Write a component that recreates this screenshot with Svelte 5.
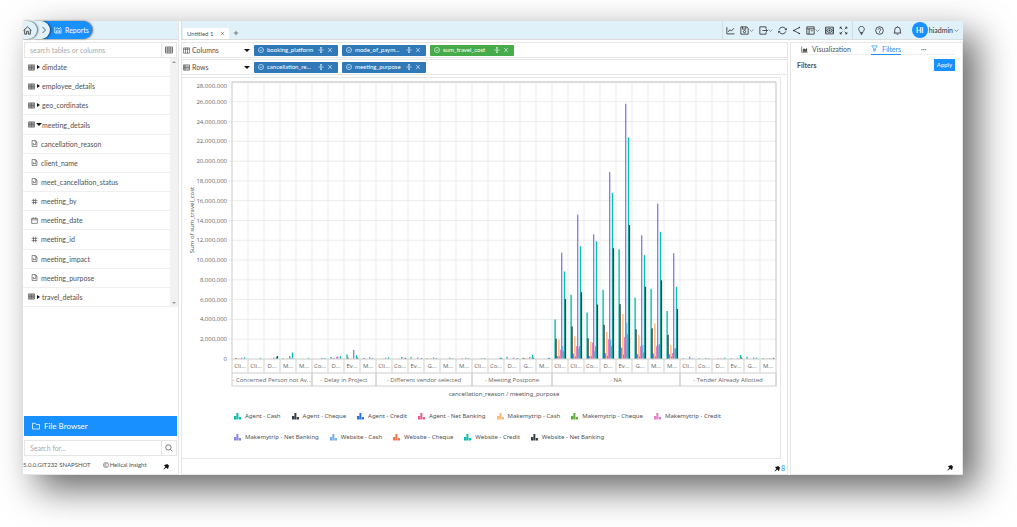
<script lang="ts">
	type Field = { name: string; kind: 'table' | 'open' | 'text' | 'number' | 'date' };

	const fields: Field[] = [
		{ name: 'dimdate', kind: 'table' },
		{ name: 'employee_details', kind: 'table' },
		{ name: 'geo_cordinates', kind: 'table' },
		{ name: 'meeting_details', kind: 'open' },
		{ name: 'cancellation_reason', kind: 'text' },
		{ name: 'client_name', kind: 'text' },
		{ name: 'meet_cancellation_status', kind: 'text' },
		{ name: 'meeting_by', kind: 'number' },
		{ name: 'meeting_date', kind: 'date' },
		{ name: 'meeting_id', kind: 'number' },
		{ name: 'meeting_impact', kind: 'text' },
		{ name: 'meeting_purpose', kind: 'text' },
		{ name: 'travel_details', kind: 'table' }
	];

	const shelves = [
		{
			label: 'Columns',
			pills: [
				{ name: 'booking_platform', measure: false },
				{ name: 'mode_of_paym...', measure: false },
				{ name: 'sum_travel_cost', measure: true }
			]
		},
		{
			label: 'Rows',
			pills: [
				{ name: 'cancellation_re...', measure: false },
				{ name: 'meeting_purpose', measure: false }
			]
		}
	];

	const tools = [
		{ icon: 'line', label: 'Chart', menu: false },
		{ icon: 'save', label: 'Save', menu: true },
		{ icon: 'export', label: 'Export', menu: true },
		{ icon: 'refresh', label: 'Refresh', menu: false },
		{ icon: 'share', label: 'Share', menu: false },
		{ icon: 'layout', label: 'Layout', menu: true },
		{ icon: 'preview', label: 'Preview', menu: false },
		{ icon: 'expand', label: 'Full screen', menu: false }
	];

	const series = [
		{ name: 'Agent - Cash', color: '#06c1ac' },
		{ name: 'Agent - Cheque', color: '#3b3f43' },
		{ name: 'Agent - Credit', color: '#2b74dc' },
		{ name: 'Agent - Net Banking', color: '#ea5b8f' },
		{ name: 'Makemytrip - Cash', color: '#fdb777' },
		{ name: 'Makemytrip - Cheque', color: '#5fae34' },
		{ name: 'Makemytrip - Credit', color: '#e07fc3' },
		{ name: 'Makemytrip - Net Banking', color: '#8684e6' },
		{ name: 'Website - Cash', color: '#70b0ee' },
		{ name: 'Website - Cheque', color: '#f47650' },
		{ name: 'Website - Credit', color: '#06c1ac' },
		{ name: 'Website - Net Banking', color: '#3b3f43' }
	];

	const groups = [
		{ name: '- Concerned Person not Av...', items: ['Cli...', 'Cli...', 'D...', 'M...', 'M...'] },
		{ name: '- Delay in Project', items: ['Co...', 'D...', 'Ev...', 'M...'] },
		{ name: '- Different vendor selected', items: ['Cli...', 'Co...', 'Ev...', 'G...', 'M...', 'M...'] },
		{ name: '- Meeting Postpone', items: ['Cli...', 'Co...', 'D...', 'G...', 'M...'] },
		{ name: '- NA', items: ['Cli...', 'Cli...', 'Co...', 'D...', 'Ev...', 'G...', 'M...', 'M...'] },
		{ name: '- Tender Already Allotted', items: ['Cli...', 'Co...', 'D...', 'Ev...', 'G...', 'M...'] }
	];

	// travel cost in millions, one value per series, for the categories of "NA"
	const naCosts = [
		[4.0, 2.05, 0.3, 0.3, 1.95, 0.25, 0.95, 10.75, 1.3, 0.8, 8.85, 6.05],
		[6.5, 3.3, 0.55, 0.35, 2.3, 0.25, 1.3, 14.6, 1.05, 1.3, 11.4, 6.75],
		[4.7, 2.1, 0.3, 0.3, 1.75, 0.25, 1.65, 12.6, 0.8, 1.3, 11.9, 5.5],
		[7.0, 3.45, 0.6, 0.45, 2.75, 0.3, 2.0, 18.9, 1.95, 1.3, 16.8, 11.2],
		[11.1, 5.55, 1.15, 1.1, 4.55, 0.45, 2.2, 25.8, 3.65, 2.5, 22.4, 13.55],
		[6.2, 3.0, 0.5, 0.45, 2.45, 0.25, 1.3, 12.5, 1.4, 0.65, 10.5, 7.3],
		[7.1, 3.1, 0.55, 0.4, 3.6, 0.25, 1.3, 15.7, 1.4, 1.5, 12.85, 7.95],
		[4.85, 2.45, 0.5, 0.35, 1.4, 0.25, 0.6, 10.7, 1.0, 1.1, 7.3, 5.05]
	];

	// category, series, cost
	const smallCosts = [
		[0, 1, 0.1], [0, 4, 0.08], [0, 7, 0.12], [0, 10, 0.18],
		[1, 10, 0.12],
		[2, 4, 0.06], [2, 7, 0.14], [2, 10, 0.2], [2, 11, 0.3],
		[3, 0, 0.08], [3, 4, 0.06], [3, 7, 0.3], [3, 8, 0.1], [3, 10, 0.65],
		[4, 4, 0.05], [4, 10, 0.12],
		[5, 7, 0.12], [5, 10, 0.1],
		[6, 0, 0.2], [6, 3, 0.1], [6, 6, 0.2], [6, 7, 0.25], [6, 10, 0.28],
		[7, 0, 0.45], [7, 1, 0.12], [7, 4, 0.12], [7, 7, 0.92], [7, 10, 0.38], [7, 11, 0.12],
		[8, 1, 0.1], [8, 7, 0.18], [8, 10, 0.1],
		[9, 4, 0.06], [9, 7, 0.12], [9, 10, 0.18],
		[10, 4, 0.06], [10, 7, 0.2], [10, 8, 0.14], [10, 11, 0.12],
		[11, 0, 0.18], [11, 7, 0.16], [11, 11, 0.08],
		[12, 0, 0.1], [12, 4, 0.1], [12, 7, 0.16], [12, 10, 0.1],
		[13, 7, 0.14], [13, 10, 0.08],
		[14, 3, 0.06], [14, 7, 0.14], [14, 10, 0.1],
		[15, 7, 0.08], [15, 10, 0.1],
		[16, 9, 0.08], [16, 10, 0.14], [16, 11, 0.1],
		[17, 0, 0.2], [17, 7, 0.14], [17, 11, 0.08],
		[18, 0, 0.12], [18, 1, 0.1], [18, 4, 0.12], [18, 7, 0.2], [18, 10, 0.42], [18, 11, 0.12],
		[19, 10, 0.12], [19, 11, 0.1],
		[28, 0, 0.08], [28, 7, 0.24], [28, 10, 0.08],
		[29, 0, 0.1], [29, 7, 0.12], [29, 10, 0.08],
		[30, 3, 0.06], [30, 6, 0.06], [30, 10, 0.14],
		[31, 0, 0.08], [31, 7, 0.1], [31, 10, 0.4], [31, 11, 0.14],
		[32, 0, 0.2], [32, 7, 0.16], [32, 10, 0.14],
		[33, 0, 0.1], [33, 4, 0.08], [33, 7, 0.1], [33, 11, 0.12]
	];

	const LEFT = 50;
	const STEP = 16;
	const TOP = 4;
	const BASE = 281;
	const MAX = 28;
	const NA_START = 20;

	const yOf = (v: number): number => BASE - (v / MAX) * (BASE - TOP);

	const categories = groups.flatMap((g) => g.items);
	const RIGHT = LEFT + categories.length * STEP;

	const ticks = Array.from({ length: 15 }, (_, i) => i * 2);

	const spans = groups.map((g, i) => {
		const before = groups.slice(0, i).reduce((n, p) => n + p.items.length, 0);
		return { name: g.name, x: LEFT + before * STEP, width: g.items.length * STEP };
	});

	const bars = [
		...smallCosts,
		...naCosts.flatMap((row, c) => row.map((v, s) => [NA_START + c, s, v]))
	].map(([c, s, v]) => ({
		x: LEFT + c * STEP + 2.4 + s * 0.94,
		y: yOf(v),
		height: BASE - yOf(v),
		color: series[s].color
	}));

	let sideTab = $state('Filters');
	let tableSearch = $state('');
	let fileSearch = $state('');
</script>

{#snippet icon(name: string)}
	<svg class="icon" viewBox="0 0 16 16" aria-hidden="true">
		{#if name === 'home'}
			<path d="M1 8 8 1.5 15 8M3 6.5V14.500h3.500v-5h3v5H13V6.500" />
		{:else if name === 'line'}
			<path d="M1.500 2v12H15M4 10.500l3-4 2.500 2.500L14 4" />
		{:else if name === 'bar-line'}
			<path d="M1.500 2v12H15M5 13V9M8 13V7M11 13V8.500M14 13V5M4 6.500l3-3 3 2.500 4-4" />
		{:else if name === 'area'}
			<path d="M1.500 1v13.500H15" />
			<path class="solid" d="M4 13V8l3-3 3 3 4-4v9z" />
		{:else if name === 'save'}
			<path d="M1.500 1.500h10.500l2.500 2.500v10.500h-13zM4.500 1.500v4h6v-4" />
			<circle cx="8" cy="10" r="2" />
		{:else if name === 'export'}
			<path d="M12.500 5V1.500h-11v13h11V11M6 8h9M12.500 5.500 15 8l-2.500 2.500" />
		{:else if name === 'refresh'}
			<path d="M2 6.500A6.300 6.300 0 0 1 14 6.200M14 9.500A6.300 6.300 0 0 1 2 9.800M12 6.500h3.500V3.500M4 9.500H.5v3" />
		{:else if name === 'share'}
			<path d="M13.500 2.500 3 8l10.500 5.500" />
			<circle class="solid" cx="13" cy="2.800" r="1.300" />
			<circle class="solid" cx="3" cy="8" r="1.300" />
			<circle class="solid" cx="13" cy="13.200" r="1.300" />
		{:else if name === 'layout'}
			<path d="M1.500 1.500h13v13h-13zM1.500 5h13M5.500 5v9.500M8.500 8.500h3.500" />
		{:else if name === 'preview'}
			<path d="M1 2h14v12H1zM1 5h2M1 8h2M1 11h2M13 5h2M13 8h2M13 11h2" />
			<ellipse cx="8" cy="8" rx="4.500" ry="3.500" />
			<circle class="solid" cx="8" cy="8" r="1.600" />
		{:else if name === 'expand'}
			<path d="M6 6 2 2M2 5V2h3M10 6l4-4M11 2h3v3M6 10l-4 4M2 11v3h3M10 10l4 4M14 11v3h-3" />
		{:else if name === 'bulb'}
			<path d="M5.500 11.500V10a5 5 0 1 1 5 0v1.500zM6 13.500h4M7 15.300h2" />
		{:else if name === 'help'}
			<circle cx="8" cy="8" r="6.800" />
			<path d="M5.800 6.300a2.200 2.200 0 1 1 3.300 2C8.300 8.700 8 9 8 10M8 11.300v1.200" />
		{:else if name === 'bell'}
			<path d="M3 12.500V7a5 5 0 0 1 10 0v5.500M1.500 12.500h13M6.500 14.800h3M8 2V.8" />
		{:else if name === 'chevron-right'}
			<path d="m5 2 6 6-6 6" />
		{:else if name === 'chevron-down'}
			<path d="m2 5 6 6 6-6" />
		{:else if name === 'columns'}
			<path d="M1 2h14v12H1zM1 5h14M5.700 2v12M10.300 2v12" />
		{:else if name === 'rows'}
			<path d="M1 2h14v12H1zM1 5h14M1 8h14M1 11h14M4.500 2v12" />
		{:else if name === 'table' || name === 'open'}
			<path d="M1 2h14v12H1zM1 5h14M1 8h14M1 11h14M4.500 2v12M8 2v12M11.500 2v12" />
		{:else if name === 'grid'}
			<path d="M1 2h14v12H1zM1 6h14M1 10h14M5.700 2v12M10.300 2v12" />
		{:else if name === 'text'}
			<path d="M2.500 1h7.500l3.500 3.500V15h-11zM9.500 1v4h4M5.500 12V8l2.500 2.500L10.500 8v4" />
		{:else if name === 'number'}
			<path d="M1.500 5.500h13M1.500 10.500h13M5.500 1.500v13M10.500 1.500v13" />
		{:else if name === 'date'}
			<path d="M1.500 3h13v11.500h-13zM1.500 6.500h13M5 1v3.500M11 1v3.500" />
		{:else if name === 'check'}
			<circle cx="8" cy="8" r="6.800" />
			<path d="m4.800 8.200 2.400 2.400 4.200-4.800" />
		{:else if name === 'move'}
			<path d="M8 0v16M1 8h14" />
			<path class="solid" d="M5 3.500 8 0l3 3.500zM5 12.500 8 16l3-3.500z" />
		{:else if name === 'close'}
			<path d="m3 2.500 10 11M13 2.500l-10 11" />
		{:else if name === 'plus'}
			<path d="M8 2v12M2 8h12" />
		{:else if name === 'filter'}
			<path d="M1.500 2h13L9.800 8.500V14H6.200V8.500zM6.200 9.500h3.600" />
		{:else if name === 'folder'}
			<path d="M1 2.500h5.500l2 2.500H15v9H1z" />
		{:else if name === 'search'}
			<circle cx="6.800" cy="6.800" r="5.300" />
			<path d="m10.800 10.800 4.200 4.200" />
		{:else if name === 'copyright'}
			<circle cx="8" cy="8" r="6.800" />
			<path d="M10.800 5.800a3.500 3.500 0 1 0 0 4.400" />
		{:else if name === 'pin'}
			<path class="solid" d="M9 1.500 14.500 7l-1.800.8-.5 4.200-1.700 1.500-3-3L2 15l-1-1 4.500-5.500-3-3L4 4l4-.5z" />
		{/if}
	</svg>
{/snippet}

<div class="window">
	<aside class="sidebar">
		<nav class="crumbs" aria-label="Breadcrumb">
			<a class="crumb home" href="#home" aria-label="Home">{@render icon('home')}</a>
			<span class="crumb arrow">{@render icon('chevron-right')}</span>
			<a class="crumb current" href="#reports">{@render icon('bar-line')} Reports</a>
		</nav>

		<div class="search">
			<input
				type="text"
				placeholder="search tables or columns"
				aria-label="Search tables or columns"
				bind:value={tableSearch}
			/>
			<button aria-label="Tables">{@render icon('grid')}</button>
		</div>

		<div class="tree">
			<ul>
				{#each fields as field}
					{@const isTable = field.kind === 'table' || field.kind === 'open'}
					<li>
						<button class="field" class:column={!isTable}>
							{@render icon(field.kind)}
							{#if isTable}
								<span class="caret" class:down={field.kind === 'open'}></span>
							{/if}
							<span>{field.name}</span>
						</button>
					</li>
				{/each}
			</ul>
			<div class="scrollbar" aria-hidden="true">
				<span class="tri up"></span>
				<span class="tri"></span>
			</div>
		</div>

		<button class="file-browser">{@render icon('folder')} File Browser</button>

		<div class="search">
			<input type="text" placeholder="Search for..." aria-label="Search for files" bind:value={fileSearch} />
			<button aria-label="Search">{@render icon('search')}</button>
		</div>

		<footer class="version">
			<span>5.0.0.GIT232 SNAPSHOT</span>
			<span class="brand">{@render icon('copyright')} Helical Insight</span>
			<button class="pin" aria-label="Pin sidebar">{@render icon('pin')}</button>
		</footer>
	</aside>

	<div class="content">
		<header class="topbar">
			<div class="tab">
				<span>Untitled 1</span>
				<button aria-label="Close tab">{@render icon('close')}</button>
			</div>
			<button class="add-tab" aria-label="Add tab">{@render icon('plus')}</button>

			<div class="tools">
				{#each tools as tool}
					<button class:menu={tool.menu} aria-label={tool.label}>
						{@render icon(tool.icon)}
						{#if tool.menu}
							<span class="chev">{@render icon('chevron-down')}</span>
						{/if}
					</button>
				{/each}
			</div>
			<div class="account">
				<button aria-label="Tips">{@render icon('bulb')}</button>
				<button aria-label="Help">{@render icon('help')}</button>
				<button aria-label="Notifications">{@render icon('bell')}</button>
				<button class="user">
					<span class="avatar">HI</span>
					<span>hiadmin</span>
					<span class="chev">{@render icon('chevron-down')}</span>
				</button>
			</div>
		</header>

		<div class="panels">
			<main class="canvas">
				{#each shelves as shelf}
					<section class="shelf">
						<button class="shelf-name">
							{@render icon(shelf.label.toLowerCase())}
							<span>{shelf.label}</span>
							<span class="caret down"></span>
						</button>
						{#each shelf.pills as pill}
							<div class="pill" class:measure={pill.measure}>
								{@render icon('check')}
								<span class="pill-name">{pill.name}</span>
								<button aria-label="Move {pill.name}">{@render icon('move')}</button>
								<button aria-label="Remove {pill.name}">{@render icon('close')}</button>
							</div>
						{/each}
					</section>
				{/each}

				<section class="chart">
					<svg class="plot" viewBox="0 0 598 324" role="img" aria-label="Sum of sum_travel_cost">
						{#each ticks as tick}
							<line class="grid" x1={LEFT - 3} x2={RIGHT} y1={yOf(tick)} y2={yOf(tick)} />
							<text class="tick" x={LEFT - 5} y={tick === MAX ? TOP + 6 : yOf(tick) + 2}>
								{(tick * 1000000).toLocaleString('en-US')}
							</text>
						{/each}
						{#each categories as _, i}
							<line class="grid" x1={LEFT + i * STEP} x2={LEFT + i * STEP} y1={TOP} y2={BASE} />
						{/each}

						{#each bars as bar}
							<rect x={bar.x} y={bar.y} width="1.400" height={bar.height} fill={bar.color} />
						{/each}

						<path class="frame" d="M{LEFT} {TOP}H{RIGHT}V{BASE}" />
						<path class="axis" d="M{LEFT} {TOP}V{BASE}H{RIGHT}" />

						{#each categories as name, i}
							<line class="cell" x1={LEFT + i * STEP} x2={LEFT + i * STEP} y1={BASE} y2={BASE + 14} />
							<text class="label" x={LEFT + (i + 0.5) * STEP} y={BASE + 9}>{name}</text>
						{/each}
						<line class="cell" x1={RIGHT} x2={RIGHT} y1={BASE} y2={BASE + 27} />
						{#each spans as span}
							<rect class="cell" x={span.x} y={BASE + 14} width={span.width} height="13" />
							<text class="label" x={span.x + span.width / 2} y={BASE + 23}>{span.name}</text>
						{/each}

						<text class="title" x={(LEFT + RIGHT) / 2} y={BASE + 37}>
							cancellation_reason / meeting_purpose
						</text>
						<text class="title" transform="translate(12 142) rotate(-90)">Sum of sum_travel_cost</text>
					</svg>

					<ul class="legend">
						{#each series as item}
							<li>
								<svg class="key" viewBox="0 0 16 16" aria-hidden="true">
									<path fill={item.color} d="M0 7h5v8H0zM5.500 0h4.500v15H5.500zM11 9h5v6h-5z" />
								</svg>
								{item.name}
							</li>
						{/each}
					</ul>
				</section>

				<footer class="canvas-foot">
					<button class="pin" aria-label="Pin canvas">{@render icon('pin')}</button>
					<span class="count">8</span>
				</footer>
			</main>

			<section class="side">
				<div class="side-tabs">
					<button class:active={sideTab === 'Visualization'} onclick={() => (sideTab = 'Visualization')}>
						{@render icon('area')} Visualization
					</button>
					<button class:active={sideTab === 'Filters'} onclick={() => (sideTab = 'Filters')}>
						{@render icon('filter')} Filters
					</button>
					<button class="more" aria-label="More">···</button>
				</div>
				<div class="side-head">
					<h2>Filters</h2>
					<button class="apply">Apply</button>
				</div>
				<footer class="side-foot">
					<button class="pin" aria-label="Pin filters">{@render icon('pin')}</button>
				</footer>
			</section>
		</div>
	</div>
</div>

<style>
	:global(body) {
		background: #fff;
		overflow: hidden;
	}

	.window {
		--line: #e6e6e6;
		--bar: #e0f1fa;
		--blue: #1890ff;
		display: grid;
		grid-template-columns: 156px minmax(0, 1fr);
		gap: 2px;
		box-sizing: border-box;
		min-height: calc(100vh - 73px);
		margin: 21px 54px 52px 23px;
		background: #fff;
		box-shadow: 14px 14px 34px rgba(0, 0, 0, 0.6);
		font-family: Lato, 'Open Sans', sans-serif;
		font-size: 7px;
		line-height: 10px;
		color: #505050;
	}

	button,
	input {
		margin: 0;
		padding: 0;
		border: 0;
		background: none;
		font: inherit;
		color: inherit;
	}

	button {
		cursor: pointer;
	}

	ul {
		margin: 0;
		padding: 0;
		list-style: none;
	}

	.icon {
		display: block;
		flex: none;
		width: 8px;
		height: 8px;
		fill: none;
		stroke: currentColor;
		stroke-width: 1.5;
	}

	.icon .solid {
		fill: currentColor;
		stroke: none;
	}

	.sidebar {
		display: flex;
		flex-direction: column;
		border-right: 1px solid var(--line);
	}

	.crumbs {
		display: flex;
		height: 18px;
		margin-bottom: 2px;
		background: var(--bar);
		border-bottom: 1px solid #dcdcdc;
	}

	.crumb {
		display: flex;
		align-items: center;
		gap: 3px;
		border-radius: 0 9px 9px 0;
		box-shadow: 1px 0 2px rgba(0, 0, 0, 0.6);
		background: var(--bar);
		color: #333;
		text-decoration: none;
	}

	.home {
		z-index: 3;
		width: 14px;
	}

	.home .icon {
		width: 9px;
		height: 9px;
	}

	.arrow {
		z-index: 2;
		justify-content: flex-end;
		width: 14px;
		margin-left: -3px;
		padding-right: 2px;
	}

	.current {
		z-index: 1;
		width: 49px;
		box-sizing: border-box;
		margin-left: -7px;
		padding-left: 11px;
		background: var(--blue);
		color: #fff;
	}

	.search {
		display: flex;
		height: 14px;
		margin: 0 1px;
		border: 1px solid var(--line);
	}

	.search input {
		flex: 1;
		min-width: 0;
		padding-left: 5px;
		outline: none;
	}

	.search input::placeholder {
		color: #aaa;
	}

	.search button {
		display: grid;
		place-items: center;
		width: 15px;
		border-left: 1px solid var(--line);
	}

	.tree {
		display: flex;
		min-height: 249px;
	}

	.tree ul {
		display: grid;
		grid-auto-rows: 1fr;
		flex: 1;
	}

	.tree li {
		display: flex;
		border-bottom: 1px solid #efefef;
	}

	.field {
		display: flex;
		align-items: center;
		gap: 2px;
		width: 100%;
		padding-left: 5px;
	}

	.field .icon {
		width: 7px;
		height: 7px;
	}

	.column {
		gap: 3px;
		padding-left: 8px;
	}

	.caret {
		width: 0;
		height: 0;
		border: 2px solid transparent;
		border-left: 3px solid #111;
		border-right: 0;
	}

	.caret.down {
		border: 3px solid transparent;
		border-top-color: #111;
		border-bottom: 0;
	}

	.field .caret.down {
		margin: 0 -2px 0 -1px;
	}

	.scrollbar {
		display: flex;
		flex-direction: column;
		align-items: center;
		justify-content: space-between;
		width: 8px;
		padding: 3px 0;
		background: #f1f1f1;
	}

	.tri {
		border: 2px solid transparent;
		border-top-color: #999;
		border-bottom: 0;
	}

	.tri.up {
		border: 2px solid transparent;
		border-bottom-color: #999;
		border-top: 0;
	}

	.file-browser {
		display: flex;
		align-items: center;
		gap: 4px;
		height: 20px;
		margin: auto 1px 4px;
		padding-left: 8px;
		background: var(--blue);
		color: #fff;
		font-size: 8px;
	}

	.version {
		display: flex;
		align-items: center;
		height: 18px;
		border-bottom: 1px solid var(--line);
		font-size: 6px;
		white-space: nowrap;
	}

	.brand {
		display: flex;
		align-items: center;
		gap: 1px;
		margin-left: 12px;
	}

	.brand .icon {
		width: 6px;
		height: 6px;
	}

	.pin {
		color: #111;
	}

	.pin .icon {
		width: 7px;
		height: 7px;
	}

	.version .pin {
		margin: 2px 8px 0 auto;
	}

	.content {
		display: flex;
		flex-direction: column;
		min-width: 0;
	}

	.topbar {
		display: flex;
		height: 18px;
		margin-bottom: 2px;
		padding-left: 1px;
		border-left: 1px solid #d5dde0;
		border-bottom: 1px solid #dcdcdc;
		background: var(--bar);
	}

	.topbar button {
		color: #333;
	}

	.tab {
		display: flex;
		align-items: center;
		justify-content: space-between;
		align-self: flex-end;
		width: 38px;
		height: 11px;
		padding: 0 4px;
		background: #fff;
		font-size: 6px;
		white-space: nowrap;
	}

	.tab .icon {
		width: 5px;
		height: 5px;
	}

	.add-tab {
		margin: 5px 0 0 4px;
	}

	.add-tab .icon {
		width: 6px;
		height: 6px;
	}

	.tools,
	.account {
		display: flex;
		border-left: 1px solid #ccdde4;
	}

	.tools {
		margin-left: auto;
		padding: 0 1px;
	}

	.tools button,
	.account button {
		display: flex;
		align-items: center;
		justify-content: center;
		width: 14px;
	}

	.tools button.menu {
		width: 19px;
	}

	.tools .icon,
	.account .icon {
		width: 9px;
		height: 9px;
	}

	.tools .chev .icon,
	.account .chev .icon {
		width: 5px;
		height: 5px;
	}

	.account button {
		width: 18px;
	}

	.account .user {
		gap: 1px;
		width: auto;
		padding: 0 4px 0 5px;
	}

	.avatar {
		display: grid;
		place-items: center;
		width: 16px;
		height: 16px;
		border-radius: 50%;
		background: var(--blue);
		color: #fff;
		font-weight: 700;
	}

	.panels {
		display: grid;
		grid-template-columns: minmax(0, 1fr) 173px;
		gap: 2px;
		flex: 1;
	}

	.canvas {
		display: flex;
		flex-direction: column;
		min-width: 0;
		border: 1px solid var(--line);
		border-top: 0;
	}

	.shelf {
		display: flex;
		align-items: center;
		gap: 4px;
		height: 14px;
		margin-bottom: 1px;
		border-top: 1px solid var(--line);
		border-bottom: 1px solid var(--line);
	}

	.shelf-name {
		display: flex;
		align-items: center;
		gap: 2px;
		width: 68px;
		padding-left: 1px;
	}

	.shelf-name .icon {
		width: 7px;
		height: 7px;
	}

	.shelf-name .caret {
		margin-left: auto;
	}

	.pill {
		display: flex;
		align-items: center;
		gap: 3px;
		height: 11px;
		padding: 0 5px 0 4px;
		border-radius: 1px;
		background: #3079b8;
		color: #fff;
		font-size: 6px;
	}

	.pill.measure {
		background: #45ab4b;
	}

	.pill .icon {
		width: 6px;
		height: 6px;
	}

	.pill-name {
		min-width: 48px;
		white-space: nowrap;
	}

	.chart {
		margin: 1px 6px 0 0;
		border: 1px solid var(--line);
		border-left: 0;
	}

	.plot {
		display: block;
		width: 100%;
	}

	.plot text {
		font-family: 'Open Sans', 'Noto Sans', sans-serif;
		font-size: 6px;
		fill: #666;
		text-anchor: middle;
	}

	.plot .tick {
		text-anchor: end;
	}

	.plot .title {
		font-family: 'Noto Sans', sans-serif;
		fill: #555;
	}

	.grid {
		stroke: #ebebeb;
	}

	.frame {
		fill: none;
		stroke: #c4c4c4;
	}

	.axis {
		fill: none;
		stroke: #d4d4d4;
	}

	.cell {
		fill: none;
		stroke: #d0d0d0;
	}

	.legend {
		display: flex;
		flex-wrap: wrap;
		gap: 11px;
		padding: 9px 20px 16px 52px;
		font-family: 'Noto Sans', sans-serif;
		font-size: 6px;
	}

	.legend li {
		display: flex;
		align-items: center;
		gap: 4px;
		white-space: nowrap;
	}

	.key {
		width: 7px;
		height: 7px;
	}

	.canvas-foot,
	.side-foot {
		display: flex;
		align-items: center;
		justify-content: flex-end;
		margin-top: auto;
		padding: 0 2px 1px 0;
	}

	.count {
		color: var(--blue);
	}

	.side {
		display: flex;
		flex-direction: column;
		border: 1px solid var(--line);
	}

	.side-tabs {
		display: flex;
		gap: 20px;
		height: 11px;
		margin: 0 8px 0 10px;
		border-bottom: 1px solid #eee;
	}

	.side-tabs button {
		display: flex;
		align-items: center;
		gap: 4px;
		height: 12px;
		box-sizing: border-box;
	}

	.side-tabs .icon {
		width: 7px;
		height: 7px;
	}

	.side-tabs .active {
		border-bottom: 1px solid var(--blue);
		color: var(--blue);
	}

	.side-head {
		display: flex;
		align-items: center;
		justify-content: space-between;
		padding: 4px 7px 0 6px;
	}

	h2 {
		margin: 0;
		font-size: 7px;
		font-weight: 700;
	}

	.apply {
		width: 21px;
		height: 12px;
		background: var(--blue);
		color: #fff;
		font-size: 6px;
	}

	.side-foot {
		padding: 0 8px 3px 0;
	}
</style>
